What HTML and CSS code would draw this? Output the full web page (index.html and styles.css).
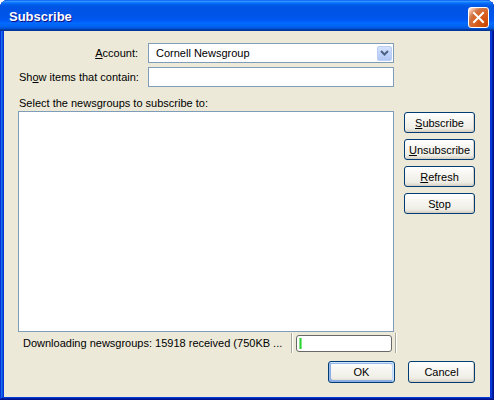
FILE: index.html
```html
<!DOCTYPE html>
<html>
<head>
<meta charset="utf-8">
<link rel="stylesheet" href="styles.css">
</head>
<body>
<div class="window">
  <div class="titlebar">
    <span class="title">Subscribe</span>
    <div class="close">
      <svg width="13" height="13" viewBox="0 0 13 13"><path d="M2 2 L11 11 M11 2 L2 11" stroke="#fff" stroke-width="2" stroke-linecap="square"/></svg>
    </div>
  </div>
  <div class="client">
    <div class="form-grid">
      <label class="lbl right"><u>A</u>ccount:</label>
      <div class="combo">
        <span class="combo-text">Cornell Newsgroup</span>
        <span class="combo-btn">
          <svg width="9" height="6" viewBox="0 0 9 6"><path d="M1 1 L4.5 4.5 L8 1" stroke="#4d6185" stroke-width="2" fill="none"/></svg>
        </span>
      </div>
      <label class="lbl">Sh<u>o</u>w items that contain:</label>
      <div class="textbox"></div>
    </div>
    <div class="caption">Select the newsgroups to subscribe to:</div>
    <div class="main">
      <div class="listbox"></div>
      <div class="btncol">
        <button class="btn wide"><u>S</u>ubscribe</button>
        <button class="btn wide"><u>U</u>nsubscribe</button>
        <button class="btn wide"><u>R</u>efresh</button>
        <button class="btn wide">S<u>t</u>op</button>
      </div>
    </div>
    <div class="status">
      <div class="status-text">Downloading newsgroups: 15918 received (750KB ...</div>
      <div class="sep"></div>
      <div class="progress-cell">
        <div class="progress"><div class="chunk"></div></div>
      </div>
      <div class="sep"></div>
    </div>
    <div class="actions">
      <button class="btn dlg default">OK</button>
      <button class="btn dlg">Cancel</button>
    </div>
  </div>
</div>
</body>
</html>
```

FILE: styles.css
```css
html, body {
  margin: 0;
  padding: 0;
  background: #ffffff;
}
body {
  width: 500px;
  height: 405px;
  overflow: hidden;
  font-family: "Liberation Sans", Arial, sans-serif;
  font-size: 11px;
  color: #000;
}
.window {
  width: 494px;
  height: 400px;
  box-sizing: border-box;
  padding: 0 4px 3px 4px;
  background: #0831d9;
  box-shadow: inset -1px -1px #00138c, inset 1px 1px #0831d9, inset -2px -2px #001ea0, inset 2px 2px #166aee, inset -3px -3px #003bda, inset 3px 3px #0855dd;
  border-radius: 8px 8px 0 0;
  display: flex;
  flex-direction: column;
}
.titlebar {
  margin: 0 -4px;
  height: 31px;
  flex: none;
  border-radius: 8px 8px 0 0;
  background: linear-gradient(to bottom, #0058ee 0%, #3593ff 4%, #288eff 6%, #127dff 8%, #036ffc 10%, #0262ee 14%, #0057e5 20%, #0054e3 24%, #0055eb 56%, #005bf5 66%, #026afe 76%, #0062ef 86%, #0052d6 92%, #0040ab 94%, #003092 100%);
  display: flex;
  align-items: center;
  justify-content: space-between;
  padding: 0 5px 0 9px;
  box-sizing: border-box;
}
.title {
  font-family: "Liberation Sans", Arial, sans-serif;
  font-weight: bold;
  font-size: 13px;
  color: #fff;
  text-shadow: 1px 1px #0f1089;
  margin-top: 2px;
}
.close {
  width: 21px;
  height: 21px;
  box-sizing: border-box;
  border: 1px solid #fff;
  border-radius: 3px;
  background: radial-gradient(circle at 90% 90%, #cc4600 0%, #dc6527 55%, #cd7546 70%, #ffccb2 90%, #fff 100%);
  display: flex;
  align-items: center;
  justify-content: center;
  margin-top: 3px;
}
.client {
  flex: 1;
  background: #ece9d8;
  padding: 12px 15px 0 14px;
  display: flex;
  flex-direction: column;
}
.form-grid {
  display: grid;
  grid-template-columns: 120px 246px;
  grid-auto-rows: 20px;
  column-gap: 10px;
  row-gap: 4px;
}
.lbl {
  line-height: 20px;
  padding-left: 1px;
  white-space: nowrap;
}
.lbl.right {
  text-align: right;
}
.combo, .textbox {
  box-sizing: border-box;
  border: 1px solid #7f9db9;
  background: #fff;
  height: 20px;
}
.combo {
  display: flex;
  align-items: center;
  justify-content: space-between;
  padding: 0 1px 0 7px;
}
.combo-text {
  line-height: 18px;
}
.combo-btn {
  width: 15px;
  height: 15px;
  box-sizing: border-box;
  border: 1px solid #b9cdf5;
  border-radius: 2px;
  background: linear-gradient(to bottom, #d6e3fd 0%, #c1d3fb 50%, #b2c7f7 100%);
  display: flex;
  align-items: center;
  justify-content: center;
}
.caption {
  margin-top: 9px;
  line-height: 14px;
  height: 14px;
  padding-left: 1px;
}
.main {
  margin-top: 1px;
  display: flex;
  gap: 10px;
}
.listbox {
  width: 376px;
  height: 221px;
  box-sizing: border-box;
  border: 1px solid #7f9db9;
  background: #fff;
}
.btncol {
  display: flex;
  flex-direction: column;
  gap: 6px;
  padding-top: 1px;
}
.btn {
  font-family: "Liberation Sans", Arial, sans-serif;
  font-size: 11px;
  color: #000;
  box-sizing: border-box;
  border: 1px solid #003c74;
  border-radius: 3px;
  background: linear-gradient(to bottom, #ffffff 0%, #f5f4ef 45%, #efeee6 80%, #d6d0c5 100%);
  box-shadow: inset -1px -1px #d6d0c5;
  padding: 0;
  margin: 0;
}
.btn.wide {
  width: 71px;
  height: 21px;
}
.btn.dlg {
  width: 67px;
  height: 22px;
}
.btn.default {
  box-shadow: inset -1px 1px #cee7ff, inset 1px 2px #98b8ea, inset -2px 2px #bcd4f6, inset 1px -1px #89ade4, inset 2px -2px #89ade4;
}
.status {
  margin-top: 1px;
  height: 20px;
  display: flex;
  align-items: stretch;
}
.status-text {
  width: 268px;
  padding-left: 5px;
  line-height: 20px;
  white-space: nowrap;
  overflow: hidden;
}
.sep {
  border-left: 1px solid #aca899;
  border-right: 1px solid #fff;
  box-sizing: border-box;
  width: 2px;
}
.progress-cell {
  padding: 2px 3px 1px 3px;
}
.progress {
  width: 96px;
  height: 17px;
  box-sizing: border-box;
  border: 1px solid #686868;
  border-radius: 3px;
  background: #fff;
  padding: 2px 0 2px 2px;
}
.chunk {
  width: 3px;
  height: 100%;
  background: linear-gradient(to right, #acedad, #2fd636 50%, #acedad);
}
.actions {
  margin-top: 8px;
  display: flex;
  justify-content: flex-end;
  gap: 13px;
}
```
